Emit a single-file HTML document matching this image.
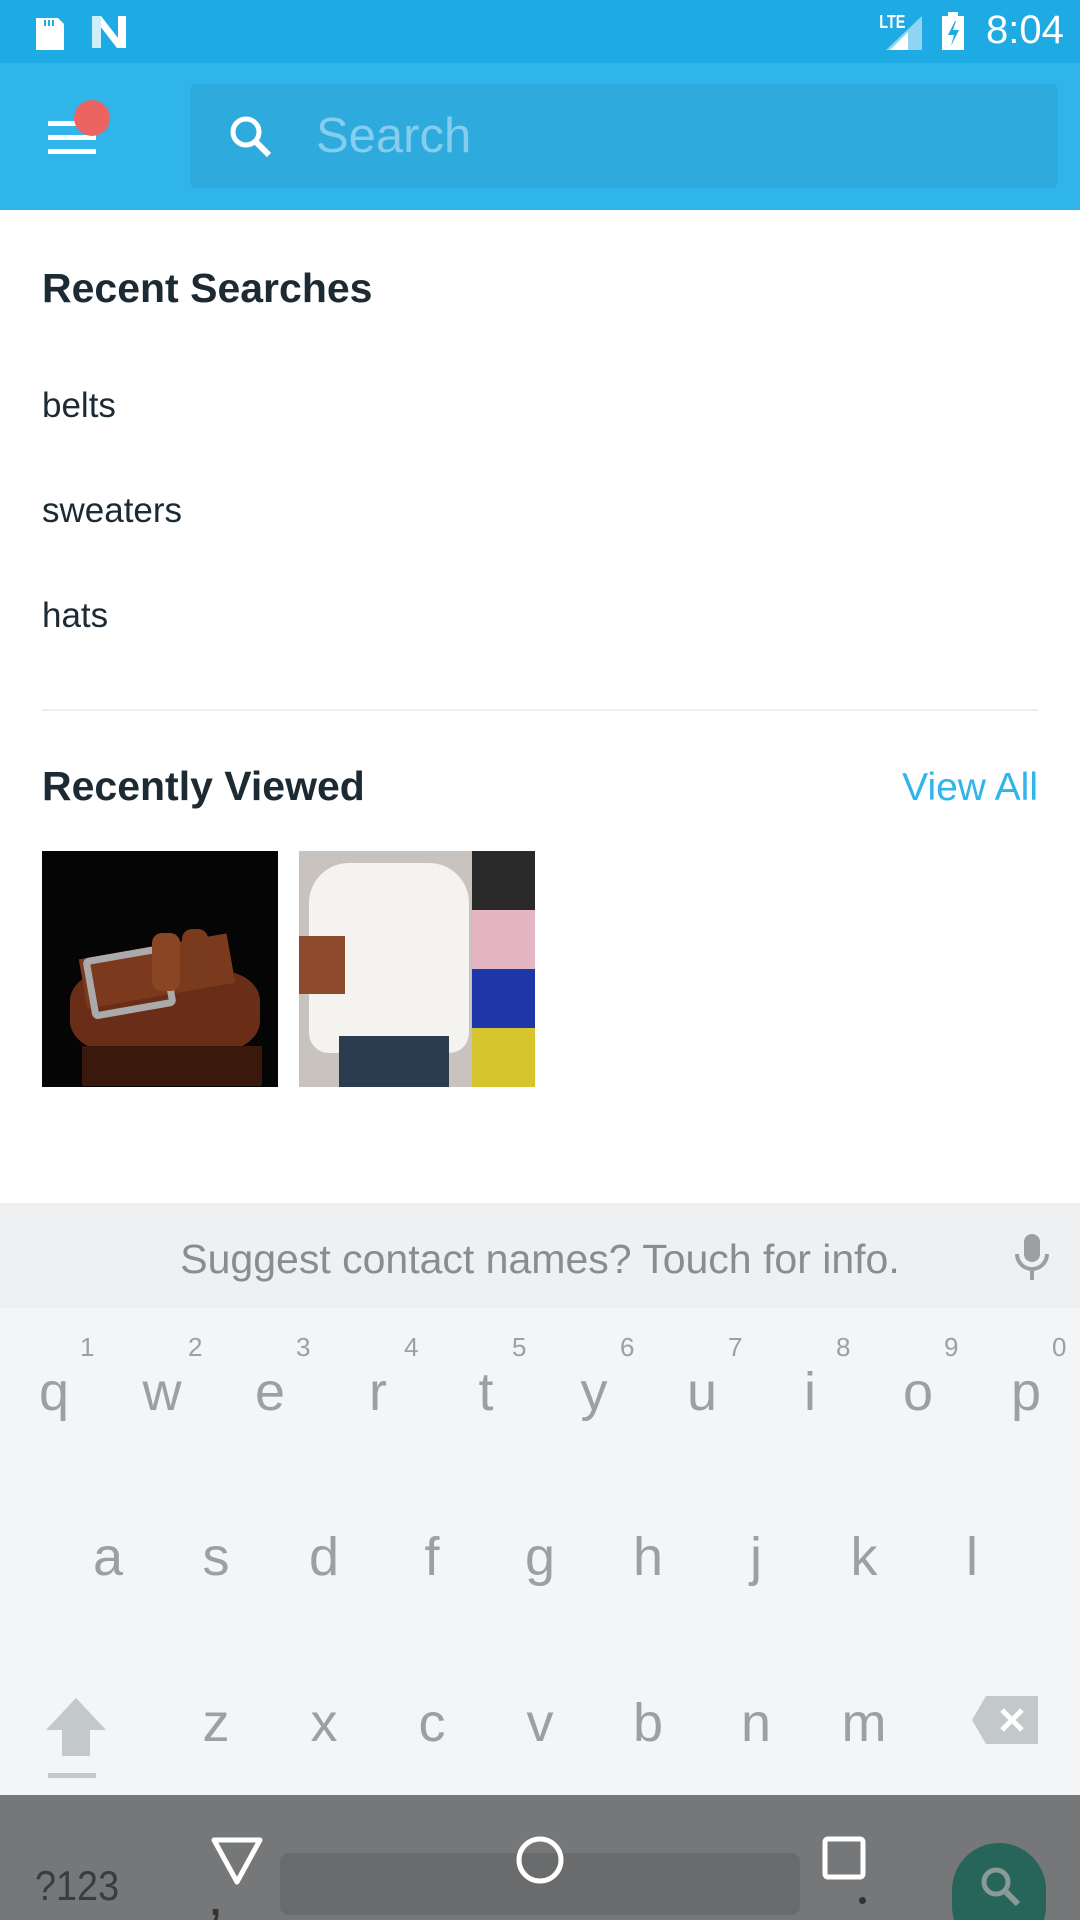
<!DOCTYPE html>
<html><head><meta charset="utf-8"><style>
*{margin:0;padding:0;box-sizing:border-box}
html{width:1080px;height:1920px;overflow:hidden}
body{width:1080px;height:1920px;position:relative;overflow:hidden;background:#fff;font-family:"Liberation Sans",sans-serif}
.a{position:absolute}
.k{position:absolute;width:108px;text-align:center;font-size:54px;color:#9aa0a4;line-height:1}
.n{position:absolute;font-size:26px;color:#9aa0a4;line-height:1}
</style></head><body>
<div class="a" style="left:0;top:0;width:1080px;height:63px;background:#1eaae2"></div>
<div class="a" style="left:0;top:63px;width:1080px;height:147px;background:#2fb5ea"></div>
<svg class="a" style="left:30px;top:12px" width="40" height="40"><path d="M6 6h22l6 6v26H6z" fill="#fff"/><rect x="14" y="8" width="2" height="6" fill="#1eaae2"/><rect x="18" y="8" width="2" height="6" fill="#1eaae2"/><rect x="22" y="8" width="2" height="6" fill="#1eaae2"/></svg>
<svg class="a" style="left:88px;top:14px" width="44" height="36"><path d="M4 2h9l17 22V2h8v32h-9L12 12v22H4z" fill="#fff"/><path d="M4 2l9 0 0 32-9 0z" fill="#cfeefb"/></svg>
<div class="a" style="left:876px;top:12px;font-size:18px;font-weight:bold;color:#fff;transform:scaleX(.8)">LTE</div>
<svg class="a" style="left:884px;top:14px" width="40" height="38"><path d="M38 2v34H2z" fill="#8fd4f2"/><path d="M24 18v18H6z" fill="#fff"/></svg>
<svg class="a" style="left:940px;top:12px" width="26" height="40"><rect x="8" y="0" width="10" height="5" fill="#fff"/><rect x="2" y="4" width="22" height="34" fill="#fff"/><path d="M15 9l-7 14h6l-3 11 8-16h-6l3-9z" fill="#1eaae2"/></svg>
<div class="a" style="left:986px;top:8px;font-size:40px;color:#fff">8:04</div>
<div class="a" style="left:48px;top:121px;width:48px;height:5px;background:#fff"></div>
<div class="a" style="left:48px;top:135px;width:48px;height:5px;background:#fff"></div>
<div class="a" style="left:48px;top:149px;width:48px;height:5px;background:#fff"></div>
<div class="a" style="left:74px;top:100px;width:36px;height:36px;border-radius:50%;background:#eb6462"></div>
<div class="a" style="left:190px;top:84px;width:868px;height:104px;background:#2eaadd;border-radius:6px"></div>
<svg class="a" style="left:226px;top:112px" width="52" height="52"><circle cx="20" cy="20" r="13" stroke="#fff" stroke-width="5" fill="none"/><path d="M29 29l14 14" stroke="#fff" stroke-width="6"/></svg>
<div class="a" style="left:316px;top:108px;font-size:49px;color:#84cdee">Search</div>
<div class="a" style="left:42px;top:265px;font-size:41px;font-weight:bold;color:#1c2a33">Recent Searches</div>
<div class="a" style="left:42px;top:386px;font-size:35px;color:#1c2a33">belts</div>
<div class="a" style="left:42px;top:491px;font-size:35px;color:#1c2a33">sweaters</div>
<div class="a" style="left:42px;top:596px;font-size:35px;color:#1c2a33">hats</div>
<div class="a" style="left:42px;top:709px;width:996px;height:2px;background:#eceeef"></div>
<div class="a" style="left:42px;top:763px;font-size:41px;font-weight:bold;color:#1c2a33">Recently Viewed</div>
<div class="a" style="right:42px;top:766px;font-size:39px;color:#2fb5ea">View All</div>
<div class="a" style="left:42px;top:851px;width:236px;height:236px;background:#050505;overflow:hidden">
<div class="a" style="left:28px;top:120px;width:190px;height:80px;border-radius:40px/30px;background:#6a2e18"></div>
<div class="a" style="left:40px;top:95px;width:150px;height:50px;background:#7b3a1e;transform:rotate(-10deg)"></div>
<div class="a" style="left:45px;top:100px;width:85px;height:62px;border:7px solid #aaa;border-radius:6px;transform:rotate(-10deg)"></div>
<div class="a" style="left:110px;top:82px;width:28px;height:58px;background:#8a4524;border-radius:10px"></div>
<div class="a" style="left:140px;top:78px;width:26px;height:56px;background:#7a3a1d;border-radius:10px"></div>
<div class="a" style="left:40px;top:195px;width:180px;height:40px;background:#3b180c"></div>
</div>
<div class="a" style="left:299px;top:851px;width:236px;height:236px;background:#c9c3c0;overflow:hidden">
<div class="a" style="left:10px;top:12px;width:160px;height:190px;background:#f5f3ef;border-radius:40px 40px 20px 20px"></div>
<div class="a" style="left:0;top:85px;width:46px;height:58px;background:#8d4a2c"></div>
<div class="a" style="left:40px;top:185px;width:110px;height:55px;background:#2c3c50"></div>
<div class="a" style="left:173px;top:0;width:63px;height:59px;background:#2a2a2a"></div>
<div class="a" style="left:173px;top:59px;width:63px;height:59px;background:#e4b6c4"></div>
<div class="a" style="left:173px;top:118px;width:63px;height:59px;background:#1f36a8"></div>
<div class="a" style="left:173px;top:177px;width:63px;height:59px;background:#d6c52c"></div>
</div>
<div class="a" style="left:0;top:1203px;width:1080px;height:105px;background:#eef0f2"></div>
<div class="a" style="left:0;top:1236px;width:1080px;text-align:center;font-size:41px;color:#878d91">Suggest contact names? Touch for info.</div>
<svg class="a" style="left:1012px;top:1232px" width="40" height="52"><rect x="12" y="2" width="16" height="28" rx="8" fill="#9aa0a4"/><path d="M5 22a15 15 0 0 0 30 0" stroke="#9aa0a4" stroke-width="4" fill="none"/><rect x="18" y="36" width="4" height="12" fill="#9aa0a4"/></svg>
<div class="a" style="left:0;top:1308px;width:1080px;height:487px;background:#f3f5f7"></div>
<div class="k" style="left:0;top:1365px">q</div><div class="k" style="left:108px;top:1365px">w</div><div class="k" style="left:216px;top:1365px">e</div><div class="k" style="left:324px;top:1365px">r</div><div class="k" style="left:432px;top:1365px">t</div><div class="k" style="left:540px;top:1365px">y</div><div class="k" style="left:648px;top:1365px">u</div><div class="k" style="left:756px;top:1365px">i</div><div class="k" style="left:864px;top:1365px">o</div><div class="k" style="left:972px;top:1365px">p</div>
<div class="n" style="left:80px;top:1334px">1</div><div class="n" style="left:188px;top:1334px">2</div><div class="n" style="left:296px;top:1334px">3</div><div class="n" style="left:404px;top:1334px">4</div><div class="n" style="left:512px;top:1334px">5</div><div class="n" style="left:620px;top:1334px">6</div><div class="n" style="left:728px;top:1334px">7</div><div class="n" style="left:836px;top:1334px">8</div><div class="n" style="left:944px;top:1334px">9</div><div class="n" style="left:1052px;top:1334px">0</div>
<div class="k" style="left:54px;top:1530px">a</div><div class="k" style="left:162px;top:1530px">s</div><div class="k" style="left:270px;top:1530px">d</div><div class="k" style="left:378px;top:1530px">f</div><div class="k" style="left:486px;top:1530px">g</div><div class="k" style="left:594px;top:1530px">h</div><div class="k" style="left:702px;top:1530px">j</div><div class="k" style="left:810px;top:1530px">k</div><div class="k" style="left:918px;top:1530px">l</div>
<div class="k" style="left:162px;top:1696px">z</div><div class="k" style="left:270px;top:1696px">x</div><div class="k" style="left:378px;top:1696px">c</div><div class="k" style="left:486px;top:1696px">v</div><div class="k" style="left:594px;top:1696px">b</div><div class="k" style="left:702px;top:1696px">n</div><div class="k" style="left:810px;top:1696px">m</div>
<svg class="a" style="left:44px;top:1696px" width="64" height="64"><path d="M32 2L2 34h16v26h28V34h16z" fill="#c3c8cb"/></svg>
<div class="a" style="left:48px;top:1773px;width:48px;height:5px;background:#c3c8cb"></div>
<svg class="a" style="left:972px;top:1696px" width="66" height="50"><path d="M14 0h52v48H14L0 24z" fill="#c3c8cb"/><path d="M30 14l20 20M50 14L30 34" stroke="#fff" stroke-width="5"/></svg>
<div class="a" style="left:0;top:1795px;width:1080px;height:125px;background:#767779;overflow:hidden">
<div class="a" style="left:35px;top:67px;font-size:42px;color:#3a3c3e;transform:scaleX(.9);transform-origin:left">?123</div>
<div class="a" style="left:280px;top:58px;width:520px;height:62px;background:#6a6b6d;border-radius:8px"></div>
<svg class="a" style="left:210px;top:41px" width="54" height="50"><path d="M4 4h46L27 46z" stroke="#fff" stroke-width="5" fill="none" stroke-linejoin="round"/></svg>
<div class="a" style="left:210px;top:85px;font-size:40px;font-weight:bold;color:#333">,</div>
<svg class="a" style="left:514px;top:39px" width="52" height="52"><circle cx="26" cy="26" r="21" stroke="#fff" stroke-width="5" fill="none"/></svg>
<svg class="a" style="left:822px;top:41px" width="44" height="44"><rect x="3" y="3" width="38" height="38" rx="3" stroke="#fff" stroke-width="5" fill="none"/></svg>
<div class="a" style="left:859px;top:102px;width:7px;height:7px;border-radius:50%;background:#333"></div>
<div class="a" style="left:952px;top:48px;width:94px;height:110px;border-radius:47px;background:#27645a"></div>
<svg class="a" style="left:976px;top:67px" width="52" height="52"><circle cx="20" cy="20" r="12" stroke="#8a9a96" stroke-width="5" fill="none"/><path d="M29 29l13 13" stroke="#8a9a96" stroke-width="6"/></svg>
</div>
</body></html>
